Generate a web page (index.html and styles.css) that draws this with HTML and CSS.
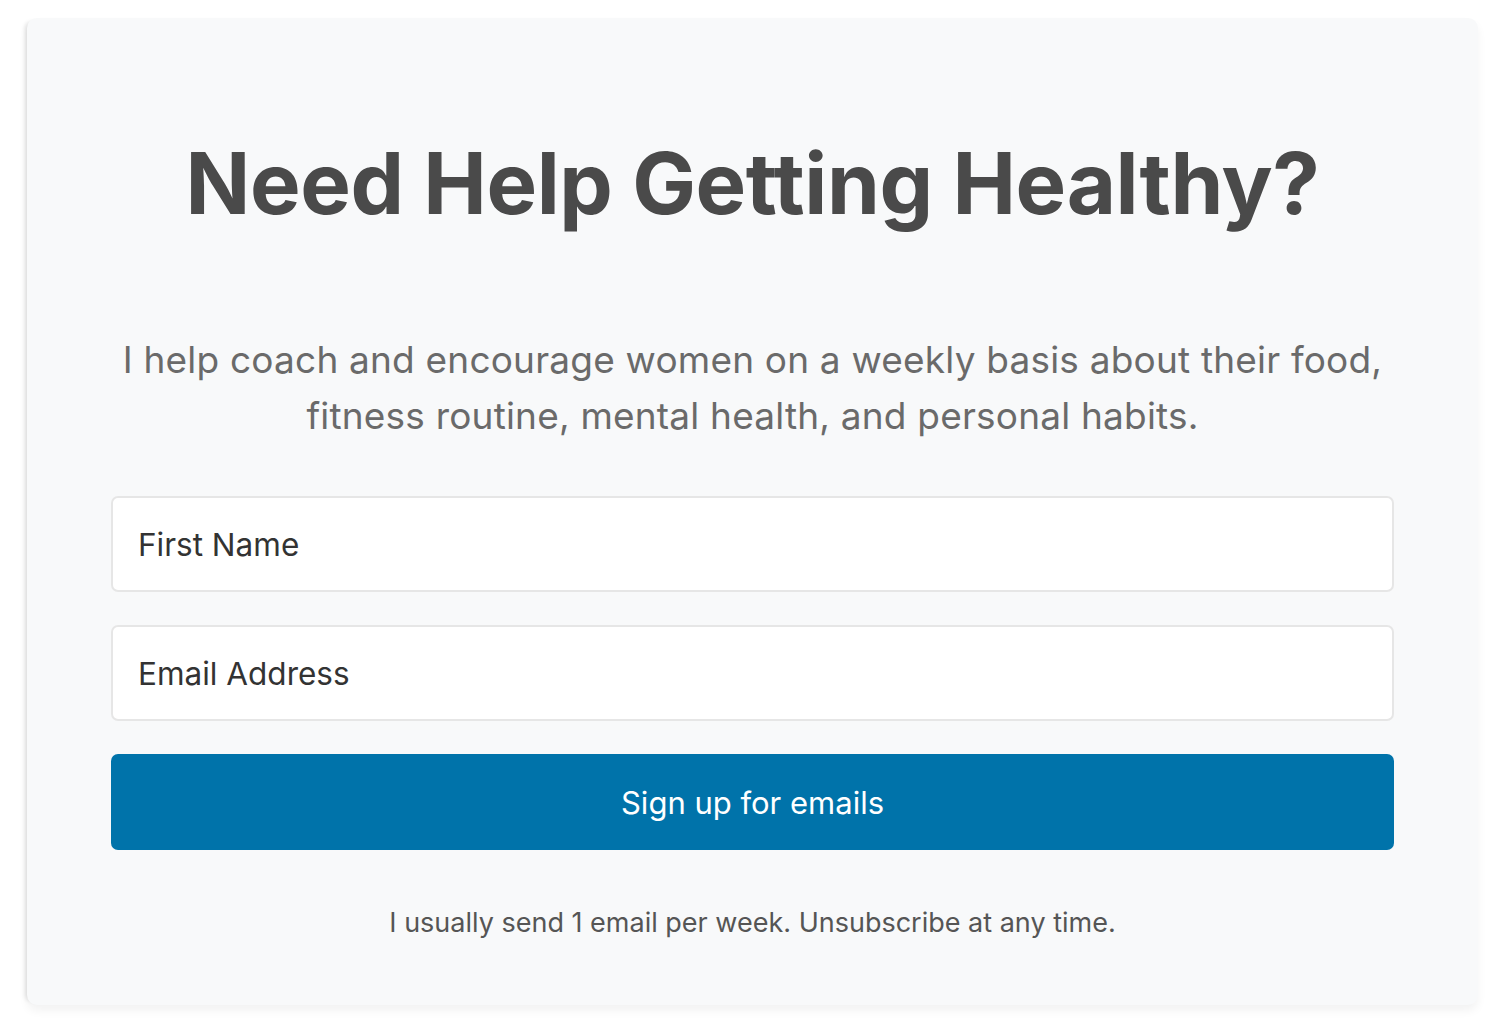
FILE: index.html
```
<!DOCTYPE html>
<html lang="en">
<head>
    <meta charset="UTF-8">
    <title>Need Help Getting Healthy?</title>
    <link rel="stylesheet" href="styles.css">
</head>
<body>
<div class="signup-card">
    <h1>Need Help Getting Healthy?</h1>
    <p class="intro">I help coach and encourage women on a weekly basis about their food, fitness routine, mental health, and personal habits.</p>
    <form class="signup-form" onsubmit="return false;">
        <input type="text" name="first_name" placeholder="First Name">
        <input type="email" name="email" placeholder="Email Address">
        <button type="submit" class="signup-btn">Sign up for emails</button>
    </form>
    <p class="fine-print">I usually send 1 email per week. Unsubscribe at any time.</p>
</div>
</body>
</html>
```

FILE: styles.css
```
body {
    font-family: 'Inter', 'Liberation Sans', sans-serif;
    background-color: #FFFFFF;
    margin: 0;
    padding: 18px 22px 22px 27px;
}
.signup-card {
    background-color: #F8F9FA;
    border-radius: 10px;
    box-shadow: -6px 0 4px -4px rgba(0, 0, 0, 0.12), 0 6px 10px rgba(0, 0, 0, 0.05);
    padding: 0 84px 62px 84px;
    height: 925px;
    text-align: center;
}
h1 {
    margin: 0;
    padding-top: 116px;
    font-size: 85px;
    font-weight: 700;
    line-height: 100px;
    color: #4A4A4A;
    letter-spacing: -0.4px;
}
.intro {
    margin: 98px 0 0 0;
    font-size: 37px;
    line-height: 56px;
    color: #6A6A6A;
    letter-spacing: 0.2px;
}
.signup-form {
    margin-top: 52px;
    display: flex;
    flex-direction: column;
    gap: 33px;
}
.signup-form input {
    height: 96px;
    box-sizing: border-box;
    border: 2px solid #E6E6E6;
    border-radius: 7px;
    background-color: #FFFFFF;
    padding: 0 25px;
    font-family: inherit;
    font-size: 31.5px;
    color: #333333;
}
.signup-form input::placeholder {
    color: #333333;
}
.signup-btn {
    height: 96px;
    border: none;
    border-radius: 7px;
    background-color: #0073AA;
    color: #FFFFFF;
    font-family: inherit;
    font-size: 31px;
    cursor: pointer;
}
.fine-print {
    margin: 58px 0 0 0;
    font-size: 27px;
    line-height: 30px;
    color: #555555;
}
```
